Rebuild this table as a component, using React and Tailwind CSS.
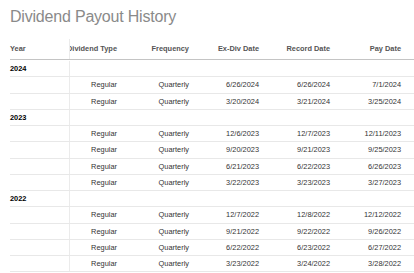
import React from "react";

const groups = [
  {
    year: "2024",
    rows: [
      ["6/26/2024", "6/26/2024", "7/1/2024"],
      ["3/20/2024", "3/21/2024", "3/25/2024"],
    ],
  },
  {
    year: "2023",
    rows: [
      ["12/6/2023", "12/7/2023", "12/11/2023"],
      ["9/20/2023", "9/21/2023", "9/25/2023"],
      ["6/21/2023", "6/22/2023", "6/26/2023"],
      ["3/22/2023", "3/23/2023", "3/27/2023"],
    ],
  },
  {
    year: "2022",
    rows: [
      ["12/7/2022", "12/8/2022", "12/12/2022"],
      ["9/21/2022", "9/22/2022", "9/26/2022"],
      ["6/22/2022", "6/23/2022", "6/27/2022"],
      ["3/23/2022", "3/24/2022", "3/28/2022"],
    ],
  },
];

const Cell = ({ w, children }) => (
  <div className={`${w} flex justify-end items-center pr-[4px] whitespace-nowrap shrink-0`}>
    <span className="shrink-0">{children}</span>
  </div>
);

const Row = ({ year, cells, header = false }) => (
  <div
    className={
      header
        ? "flex h-[21px] border-b-[1.5px] border-[#c4c4c4]"
        : "flex h-[16.25px] border-b border-[#e8e8e8]"
    }
  >
    <div className="w-[60px] shrink-0 relative z-10 bg-white border-r border-[#ebebeb] flex items-center">
      {year}
    </div>
    <Cell w="w-[51px]">{cells[0]}</Cell>
    <Cell w="w-[72px]">{cells[1]}</Cell>
    <Cell w="w-[70px]">{cells[2]}</Cell>
    <Cell w="w-[71px]">{cells[3]}</Cell>
    <Cell w="w-[71px]">{cells[4]}</Cell>
    <div className="flex-1" />
  </div>
);

export default function App() {
  return (
    <div className="w-[414px] h-[273px] overflow-hidden bg-white font-['Liberation_Sans',Arial,sans-serif]">
      <h1 className="pl-[10px] pt-[7px] text-[16px] leading-[20px] text-[#8a8a8a] tracking-[-0.2px]">
        Dividend Payout History
      </h1>
      <div className="ml-[10px] mt-[12px] text-[7.4px] text-[#333]">
        <div className="font-bold text-[#555]">
          <Row
            header
            year="Year"
            cells={["Dividend Type", "Frequency", "Ex-Div Date", "Record Date", "Pay Date"]}
          />
        </div>
        <div className="pt-[1px]">
          {groups.map((g) => (
            <React.Fragment key={g.year}>
              <Row year={<span className="font-bold text-black">{g.year}</span>} cells={["", "", "", "", ""]} />
              {g.rows.map((r, i) => (
                <Row key={i} year="" cells={["Regular", "Quarterly", r[0], r[1], r[2]]} />
              ))}
            </React.Fragment>
          ))}
        </div>
      </div>
    </div>
  );
}
